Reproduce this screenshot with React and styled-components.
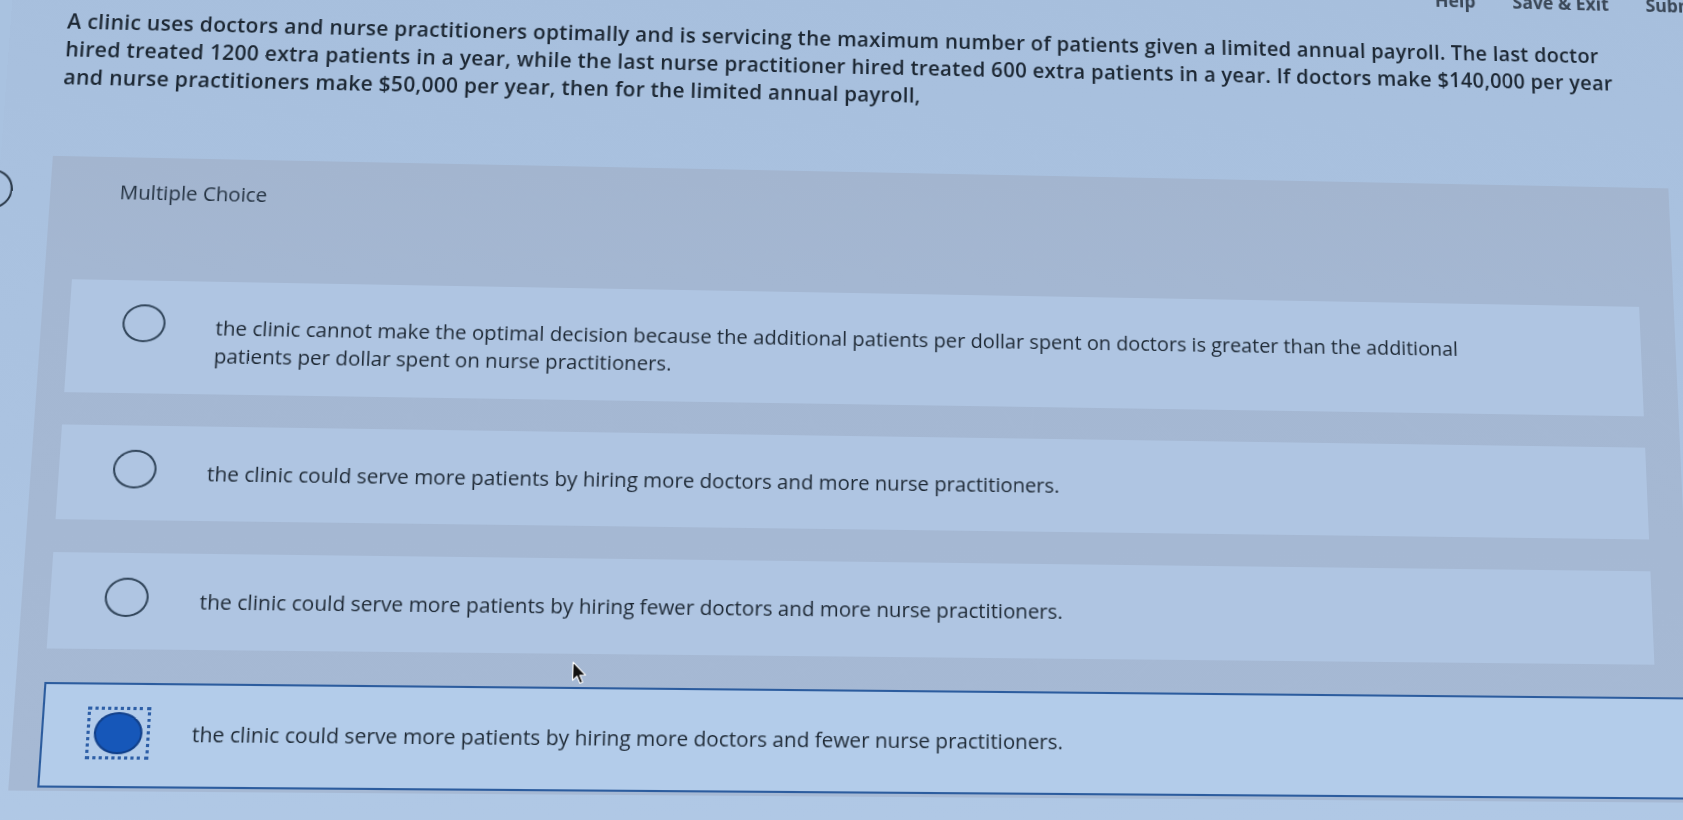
import React from "react";
import styled, { createGlobalStyle } from "styled-components";

const GlobalStyle = createGlobalStyle`
  html, body {
    margin: 0;
    padding: 0;
    background: #a9c2e0;
    overflow: hidden;
  }
  body {
    font-family: "Open Sans", "Liberation Sans", sans-serif;
    color: #1f2b38;
  }
`;

const Viewport = styled.div`
  width: 1683px;
  height: 820px;
  overflow: hidden;
  background: #a9c2e0;
`;

/* the screen is photographed at a slight angle */
const Stage = styled.div`
  position: relative;
  width: 1760px;
  height: 920px;
  margin-top: -40px;
  background: linear-gradient(180deg, #a7bfdd 0%, #abc3e1 55%, #b1c9e6 100%);
  transform-origin: 900px 440px;
  transform: perspective(2000px) rotateZ(0.55deg) rotateX(8deg) rotateY(2.4deg);
`;

const TopBar = styled.div`
  display: flex;
  justify-content: flex-end;
  align-items: flex-start;
  gap: 39px;
  height: 40px;
  padding: 2px 17px 0 0;
  box-sizing: border-box;
  font-size: 18.7px;
  line-height: 18px;
  font-weight: 700;
  color: #3b4858;
`;

const TopLink = styled.span`
  white-space: nowrap;
`;

const Question = styled.p`
  margin: 0;
  padding: 13px 0 0 56px;
  font-size: 21px;
  letter-spacing: 0.28px;
  line-height: 28.8px;
  font-weight: 600;
  color: #1c2733;
  white-space: nowrap;
`;

const Panel = styled.section`
  width: 1641px;
  margin: 68px 0 0 51px;
  padding: 22px 36px 3px 27px;
  box-sizing: border-box;
  background: linear-gradient(180deg, #a3b5cf 0px, #a4b7d2 120px, #a6b9d4 100%);
`;

const PanelTitle = styled.div`
  margin-left: 41px;
  font-size: 20.2px;
  line-height: 27px;
  font-weight: 500;
  color: #243241;
`;

const OptionList = styled.div`
  display: flex;
  flex-direction: column;
  gap: 32px;
  margin-top: 76px;
`;

const Option = styled.label`
  display: flex;
  align-items: flex-start;
  padding: 32px 0 25px ${(p) => (p.$selected ? 41 : 43)}px;
  background: ${(p) => (p.$selected ? "#b3ccea" : "#afc5e2")};
  border: ${(p) => (p.$selected ? "2px solid #2c5c9e" : "none")};
  border-right: none;
  margin-right: ${(p) => (p.$selected ? "-120px" : "0")};
  cursor: pointer;
`;

const RadioSlot = styled.span`
  display: flex;
  align-items: center;
  justify-content: center;
  flex-shrink: 0;
  width: 60px;
  height: 50px;
  margin-top: ${(p) => (p.$focused ? -11 : -14)}px;
  box-sizing: border-box;
  border: ${(p) => (p.$focused ? "3px dotted #2d5ea6" : "none")};
`;

const Radio = styled.span`
  display: block;
  width: ${(p) => (p.$checked ? 46 : 42)}px;
  height: ${(p) => (p.$checked ? 40 : 38)}px;
  border-radius: 50%;
  box-sizing: border-box;
  border: 2px solid ${(p) => (p.$checked ? "#103f8a" : "#33475c")};
  background: ${(p) => (p.$checked ? "#1657b9" : "transparent")};
`;

const OptionText = styled.span`
  margin-left: 40px;
  max-width: 1270px;
  font-size: 20.2px;
  line-height: 28px;
  font-weight: 500;
  color: #1e2935;
`;

const EdgeButton = styled.span`
  position: absolute;
  left: -26px;
  top: 222px;
  width: 36px;
  height: 36px;
  border-radius: 50%;
  border: 2px solid #2b3a4a;
`;

const Pointer = styled.svg`
  position: absolute;
  left: 582px;
  top: 702px;
  width: 15px;
  height: 23px;
`;

const options = [
  {
    text: "the clinic cannot make the optimal decision because the additional patients per dollar spent on doctors is greater than the additional patients per dollar spent on nurse practitioners.",
  },
  {
    text: "the clinic could serve more patients by hiring more doctors and more nurse practitioners.",
  },
  {
    text: "the clinic could serve more patients by hiring fewer doctors and more nurse practitioners.",
  },
  {
    text: "the clinic could serve more patients by hiring more doctors and fewer nurse practitioners.",
    selected: true,
  },
];

const App = () => {
  return (
    <Viewport>
      <GlobalStyle />
      <Stage>
        <TopBar>
          <TopLink>Help</TopLink>
          <TopLink>Save &amp; Exit</TopLink>
          <TopLink>Submit</TopLink>
        </TopBar>
        <Question>
          A clinic uses doctors and nurse practitioners optimally and is servicing the maximum number of patients given a limited annual payroll. The last doctor
          <br />
          hired treated 1200 extra patients in a year, while the last nurse practitioner hired treated 600 extra patients in a year. If doctors make $140,000 per year
          <br />
          and nurse practitioners make $50,000 per year, then for the limited annual payroll,
        </Question>
        <Panel>
          <PanelTitle>Multiple Choice</PanelTitle>
          <OptionList>
            {options.map((o, i) => (
              <Option key={i} $selected={o.selected}>
                <RadioSlot $focused={o.selected}>
                  <Radio $checked={o.selected} />
                </RadioSlot>
                <OptionText>{o.text}</OptionText>
              </Option>
            ))}
          </OptionList>
        </Panel>
        <EdgeButton />
        <Pointer viewBox="0 0 13 21">
          <path
            d="M1 1 L1 17 L4.8 13.4 L7.6 19.6 L10 18.5 L7.3 12.5 L12.2 12.3 Z"
            fill="#111"
            stroke="#fff"
            strokeWidth="1"
            strokeLinejoin="round"
          />
        </Pointer>
      </Stage>
    </Viewport>
  );
};

export default App;
